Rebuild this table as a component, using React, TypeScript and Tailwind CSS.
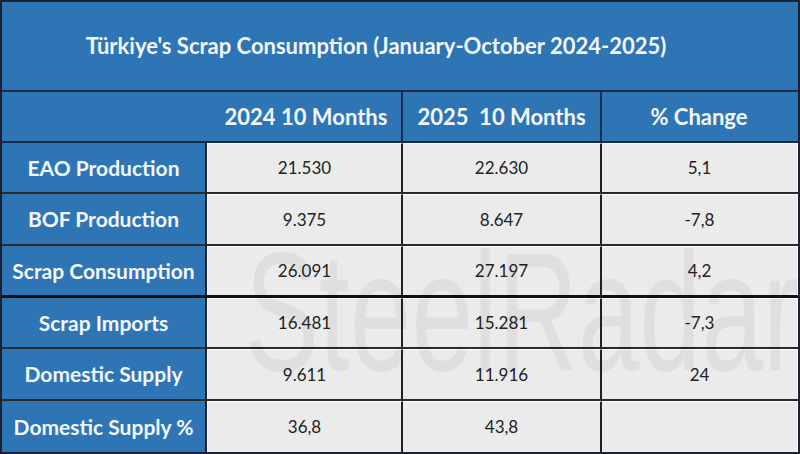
import React from "react";

const rows: { label: string; a: string; b: string; c: string; h: string; thick?: boolean }[] = [
  { label: "EAO Production", a: "21.530", b: "22.630", c: "5,1", h: "h-[51px]" },
  { label: "BOF Production", a: "9.375", b: "8.647", c: "-7,8", h: "h-[52px]" },
  { label: "Scrap Consumption", a: "26.091", b: "27.197", c: "4,2", h: "h-[52px]", thick: true },
  { label: "Scrap Imports", a: "16.481", b: "15.281", c: "-7,3", h: "h-[51px]" },
  { label: "Domestic Supply", a: "9.611", b: "11.916", c: "24", h: "h-[52px]" },
  { label: "Domestic Supply %", a: "36,8", b: "43,8", c: "", h: "h-[51px]" },
];

export default function App() {
  const font = { fontFamily: "Lato, 'Open Sans', sans-serif" };
  return (
    <div
      className="relative w-[800px] h-[454px] overflow-hidden border-2 border-[#1b2233] bg-[#2e75b6]"
      style={font}
    >
      <div className="h-[90px] border-b-2 border-[#1b2a4a] flex items-center justify-center pb-[2px] pr-[48px]">
        <span className="text-[22px] font-bold text-[#f3f7fc]">
          Türkiye's Scrap Consumption (January-October 2024-2025)
        </span>
      </div>
      <div className="h-[51px] grid grid-cols-[205px_196px_199px_1fr] border-b-2 border-[#1b2a4a] text-[22px] font-bold text-[#f3f7fc]">
        <div className="flex items-center justify-center" />
        <div className="flex items-center justify-center border-r-2 border-[#1b2a4a] pl-[4px]">2024 10 Months</div>
        <div className="flex items-center justify-center border-r-2 border-[#1b2a4a]">2025&nbsp; 10 Months</div>
        <div className="flex items-center justify-center pr-[2px]">% Change</div>
      </div>
      {rows.map((r, i) => (
        <div
          key={i}
          className={`${r.h} grid grid-cols-[205px_196px_199px_1fr] ${
            i === rows.length - 1 ? "" : r.thick ? "border-b-[3px] border-[#111]" : "border-b-2 border-[#2a2a2a]"
          }`}
        >
          <div className="flex items-center justify-center border-r-2 border-[#1b2233] bg-[#2e75b6] text-[21px] font-bold text-[#f3f7fc] whitespace-nowrap">
            {r.label}
          </div>
          <div className="flex items-center justify-center border-r-2 border-[#222] bg-[#ebebeb] text-[17px] text-[#222] border-t border-l border-t-white border-l-white">
            {r.a}
          </div>
          <div className="flex items-center justify-center border-r-2 border-[#222] bg-[#ebebeb] text-[17px] text-[#222] border-t border-t-white">
            {r.b}
          </div>
          <div className="flex items-center justify-center bg-[#ebebeb] text-[17px] text-[#222] border-t border-t-white border-r border-r-white">
            {r.c}
          </div>
        </div>
      ))}
      <div
        className="pointer-events-none absolute left-[243px] top-[226px] text-[168px] leading-none text-black/[0.05] origin-left scale-x-[0.66] whitespace-nowrap"
        style={{ fontFamily: "'Liberation Sans', sans-serif" }}
      >
        SteelRadar
      </div>
    </div>
  );
}
